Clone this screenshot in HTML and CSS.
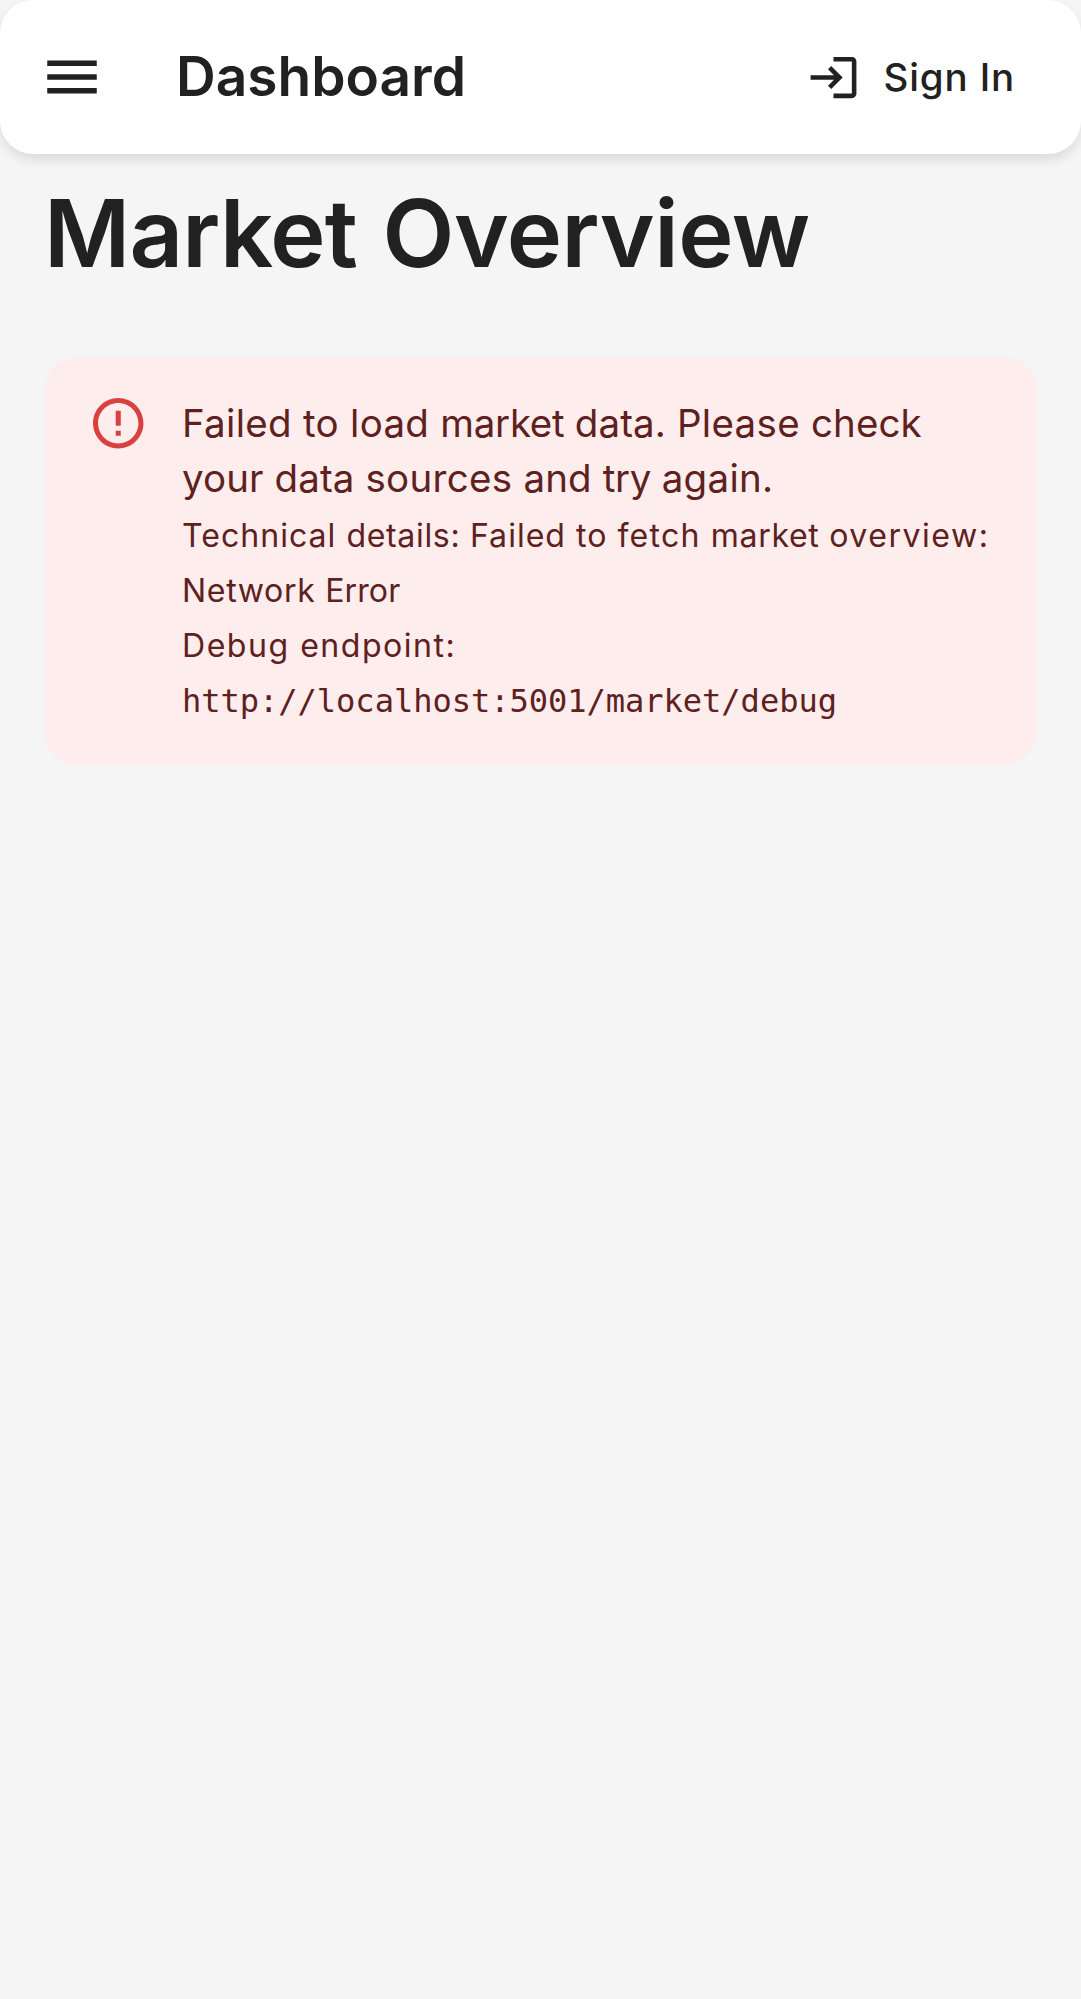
FILE: index.html
```html
<!DOCTYPE html>
<html lang="en">
<head>
<meta charset="utf-8">
<title>Dashboard</title>
<link rel="stylesheet" href="styles.css">
</head>
<body>
<header class="app-bar">
  <button class="menu-button" aria-label="Open menu">
    <svg class="menu-icon" viewBox="0 0 24 24"><path d="M3 18h18v-2H3zm0-5h18v-2H3zm0-7v2h18V6z"/></svg>
  </button>
  <div class="app-title">Dashboard</div>
  <button class="sign-in">
    <svg class="sign-in-icon" viewBox="0 0 24 24"><path d="M11 7 9.6 8.4l2.6 2.6H2v2h10.2l-2.6 2.6L11 17l5-5zm9 12h-8v2h8c1.1 0 2-.9 2-2V5c0-1.1-.9-2-2-2h-8v2h8z"/></svg>
    <span>Sign In</span>
  </button>
</header>
<main class="content">
  <h1 class="page-title"><span class="title-lead">Market</span> Overview</h1>
  <div class="alert" role="alert">
    <svg class="alert-icon" viewBox="0 0 24 24"><path d="M11 15h2v2h-2zm0-8h2v6h-2zm.99-5C6.47 2 2 6.48 2 12s4.47 10 9.99 10C17.52 22 22 17.52 22 12S17.52 2 11.99 2M12 20c-4.42 0-8-3.58-8-8s3.58-8 8-8 8 3.58 8 8-3.58 8-8 8"/></svg>
    <div class="alert-message">
      Failed to load <span class="tight">market </span><span class="snug">data. </span>Please <span class="snug">check</span>
      <span class="snug">your data </span>sources <span class="snug">and </span><span class="tight">try </span>again.
      <br><small>Technical <span class="even">details: </span>Failed to <span class="loose">fetch </span><span class="even">market </span><span class="looser">overview:</span> <span class="even">Network </span><span class="snug">Error</span></small>
      <br><small><span class="looser">Debug endpoint:</span> <code>http://localhost:5001/market/debug</code></small>
    </div>
  </div>
</main>
</body>
</html>
```
FILE: styles.css
```css
* {
  box-sizing: border-box;
}

body {
  margin: 0;
  min-height: 1999px;
  background: #f5f5f5;
  color: #212121;
  font-family: Inter, Roboto, sans-serif;
}

button {
  border: 0;
  background: none;
  color: inherit;
  font-family: inherit;
}

svg {
  display: block;
  flex: none;
  fill: currentColor;
}

.app-bar {
  display: flex;
  align-items: center;
  height: 154px;
  padding: 0 44px 0 5.5px;
  border-radius: 33px;
  background: #fff;
  box-shadow: 0 5.5px 11px rgba(0, 0, 0, 0.1);
}

.menu-button {
  padding: 33px;
}

.menu-icon {
  width: 66px;
  height: 66px;
}

.app-title {
  flex: 1;
  margin-left: 38.5px;
  padding-bottom: 2px;
  font-size: 55px;
  font-weight: 600;
  line-height: 88px;
}

.sign-in {
  display: flex;
  align-items: center;
  gap: 23px;
  padding: 16px 22px;
  font-size: 38.5px;
  font-weight: 500;
  line-height: 67px;
  letter-spacing: 0.85px;
}

.sign-in-icon {
  width: 55px;
  height: 55px;
}

.content {
  padding: 22px 44px;
}

.page-title {
  margin: 0 0 65.5px;
  font-size: 93.5px;
  font-weight: 600;
  line-height: 115.5px;
  letter-spacing: -0.4px;
  word-spacing: 2.5px;
}

.title-lead {
  letter-spacing: -0.85px;
}

.alert {
  display: flex;
  padding: 17px 44px 16.5px;
  border-radius: 33px;
  background: #fdeded;
  color: #5f2120;
  font-size: 38.5px;
  line-height: 1.43;
  letter-spacing: 0.3px;
}

.alert-icon {
  width: 60.5px;
  height: 60.5px;
  margin: 19.25px 33.5px 0 0;
  color: #d94141;
}

.alert-message {
  flex: 1;
  min-width: 0;
  margin-right: -10px;
  padding: 22px 0;
}

small {
  font-size: 32.08px;
  letter-spacing: 1px;
}

code {
  font-family: "DejaVu Sans Mono", monospace;
  letter-spacing: -0.05px;
}

/* Letter fitting */
.tight {
  letter-spacing: -0.3px;
}

.snug {
  letter-spacing: 0.1px;
}

.even {
  letter-spacing: 0.65px;
}

.loose {
  letter-spacing: 1.2px;
}

.looser {
  letter-spacing: 1.5px;
}
```
